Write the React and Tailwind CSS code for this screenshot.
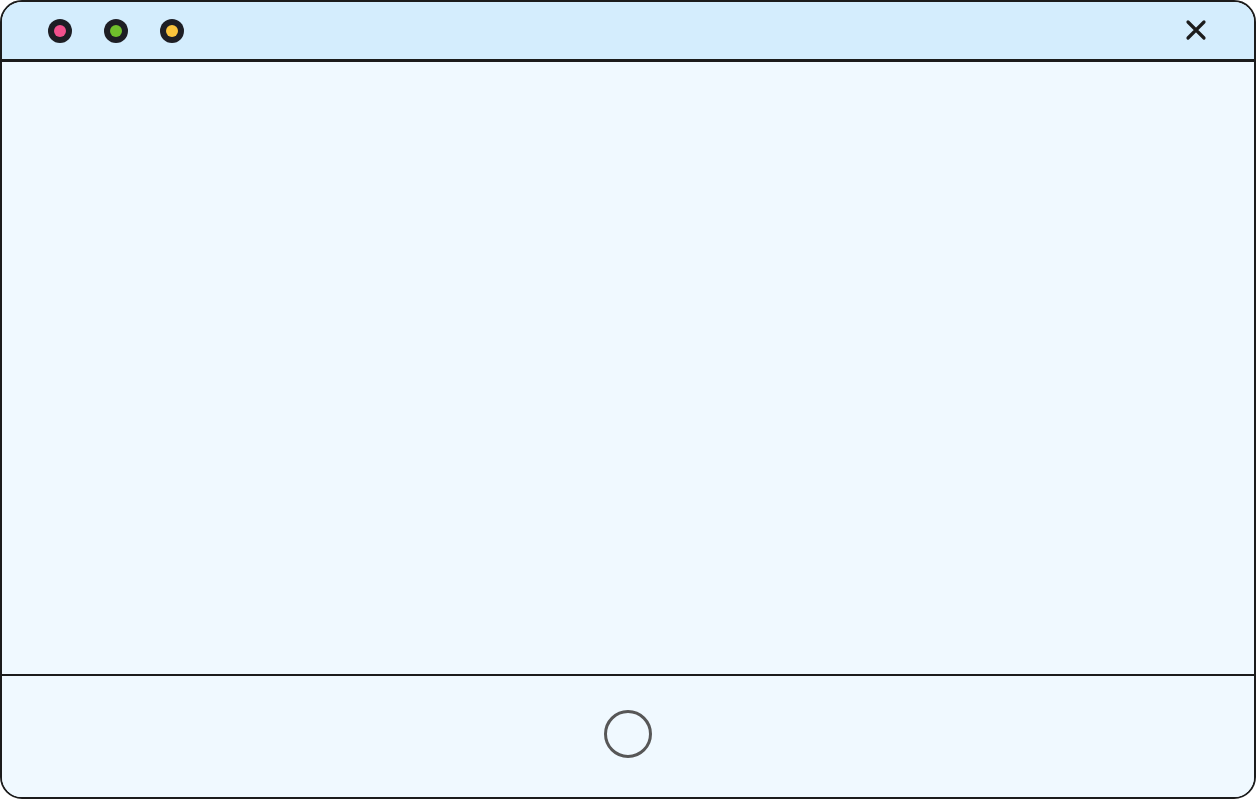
export default function App() {
  return (
    <div className="w-[1256px] h-[799px] bg-white">
      <div className="w-full h-full flex flex-col border-2 border-[#1c1c1c] rounded-[22px] overflow-hidden bg-[#f0f9ff]">
        <div className="h-[60px] shrink-0 bg-[#d4edfd] border-b-[3px] border-[#1c1c1c] flex items-center pl-[46px] pr-[47px]">
          <div className="flex items-center gap-[32px] mt-[1px]">
            <div className="w-[24px] h-[24px] rounded-full bg-[#1e1e24] flex items-center justify-center">
              <div className="w-[12px] h-[12px] rounded-full bg-[#f2508c]" />
            </div>
            <div className="w-[24px] h-[24px] rounded-full bg-[#1e1e24] flex items-center justify-center">
              <div className="w-[12px] h-[12px] rounded-full bg-[#70bf2b]" />
            </div>
            <div className="w-[24px] h-[24px] rounded-full bg-[#1e1e24] flex items-center justify-center">
              <div className="w-[12px] h-[12px] rounded-full bg-[#fbc33c]" />
            </div>
          </div>
          <div className="ml-auto mb-[1px]">
            <svg width="22" height="22" viewBox="0 0 22 22" fill="none">
              <path d="M3 3 L19 19 M19 3 L3 19" stroke="#1c1c1c" strokeWidth="3.2" strokeLinecap="round" />
            </svg>
          </div>
        </div>
        <div className="flex-1 bg-[#f0f9ff]" />
        <div className="h-[123px] shrink-0 border-t-2 border-[#1c1c1c] bg-[#f0f9ff] flex items-center justify-center pb-[6px]">
          <div className="w-[48px] h-[48px] rounded-full border-[3px] border-[#575757]" />
        </div>
      </div>
    </div>
  );
}
